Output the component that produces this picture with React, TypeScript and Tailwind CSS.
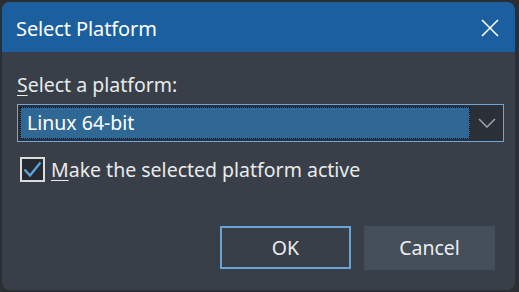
import React from 'react';

export default function App() {
  return (
    <div className="w-[519px] h-[292px] bg-[#2b2e33] p-[2px] pr-[4px] pb-[2px]" style={{ fontFamily: '"Noto Sans", "Open Sans", sans-serif' }}>
      <div className="h-full flex flex-col rounded-[8px] overflow-hidden bg-[#383f48]">
        {/* title bar */}
        <div className="h-[50px] bg-[#1b5f9f] flex items-center justify-between pl-[14px] pr-[16px] shrink-0">
          <span className="text-[20px] text-white tracking-[-0.1px] mt-[3px]">Select Platform</span>
          <svg width="18" height="18" viewBox="0 0 18 18" className="mt-[1px]">
            <path d="M1 1 L17 17 M17 1 L1 17" stroke="white" strokeWidth="1.6" />
          </svg>
        </div>

        <div className="flex flex-col px-[15px] pt-[21px] flex-1">
          <div className="text-[19.5px] text-[#e8eaec] leading-[24px]">
            <span className="underline underline-offset-[3px]">S</span>elect a platform:
          </div>

          {/* combo */}
          <div className="mt-[7px] h-[38px] w-[487px] border border-[#6ea6d6] flex bg-[#2b3038]">
            <div className="flex-1 m-[2px] mr-0 bg-[#2f6894] border border-dotted border-black flex items-center pl-[6px] text-[19.5px] text-white">
              Linux 64-bit
            </div>
            <div className="w-[33px] flex items-center justify-center">
              <svg width="18" height="10" viewBox="0 0 18 10">
                <path d="M1 1 L9 9 L17 1" stroke="#9aa0a8" strokeWidth="1.6" fill="none" />
              </svg>
            </div>
          </div>

          {/* checkbox */}
          <div className="mt-[13px] flex items-center gap-[6px] pl-[3px]">
            <div className="w-[25px] h-[25px] border-2 border-[#d8dce0] bg-[#262a30] flex items-center justify-center">
              <svg width="19" height="17" viewBox="0 0 19 17">
                <path d="M1.5 8.5 L7 14.5 L17.5 1.5" stroke="#5aa6e0" strokeWidth="2.2" fill="none" />
              </svg>
            </div>
            <span className="text-[19.5px] text-[#e8eaec]">
              <span className="underline underline-offset-[3px]">M</span>ake the selected platform active
            </span>
          </div>

          {/* buttons */}
          <div className="mt-auto mb-[20px] flex justify-end gap-[13px] pr-[5px]">
            <button className="w-[131px] h-[43px] border-2 border-[#6aa3d5] bg-[#383f48] text-[19.5px] text-[#eceef0]">
              OK
            </button>
            <button className="w-[131px] h-[44px] bg-[#444f5a] text-[19.5px] text-[#eceef0]">
              Cancel
            </button>
          </div>
        </div>
      </div>
    </div>
  );
}
